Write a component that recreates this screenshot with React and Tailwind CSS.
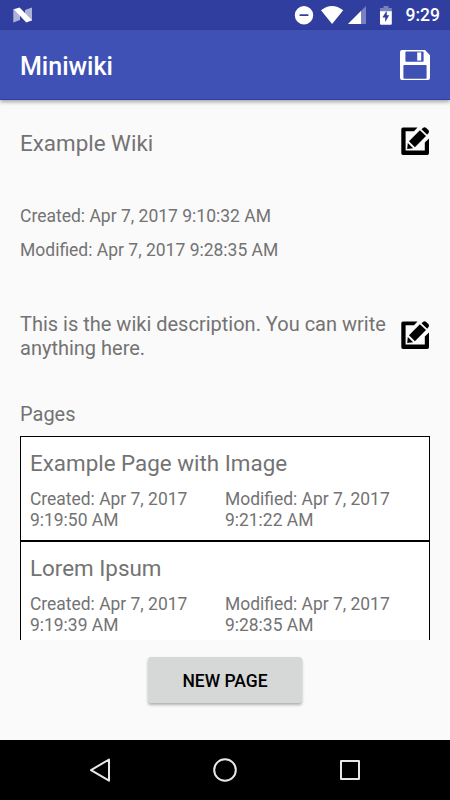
const pages = [
  {
    title: "Example Page with Image",
    created: "Apr 7, 2017 9:19:50 AM",
    modified: "Apr 7, 2017 9:21:22 AM",
  },
  {
    title: "Lorem Ipsum",
    created: "Apr 7, 2017 9:19:39 AM",
    modified: "Apr 7, 2017 9:28:35 AM",
  },
];

const EditIcon = () => (
  <svg className="h-7 w-7" viewBox="0 0 28 28" fill="currentColor">
    <path d="M2 .5H16.5L13 4.2H4.6V23.6H23.8V15.4L28 11.6V26.2A1.8 1.8 0 0 1 26.2 28H2A1.8 1.8 0 0 1 .3 26.2V2.3A1.8 1.8 0 0 1 2 .5Z" />
    <path d="M18.9 3.3L25 9.1L13.9 20.2L8 14.3Z" />
    <path d="M6.8 15.9L12.2 21.3L6.2 22Z" />
    <path d="M20.5 2.2L22.2 .7Q23.6 -.2 25 .7L27.4 3Q28.5 4.6 27.5 6L26.2 7.7Z" />
  </svg>
);

const SaveIcon = () => (
  <svg className="h-[30px] w-[30px]" viewBox="0 0 30 30" fill="white">
    <path
      fillRule="evenodd"
      d="M2 0H25L30 5.2V28A2 2 0 0 1 28 30H2A2 2 0 0 1 0 28V2A2 2 0 0 1 2 0ZM6.2 1.4Q5.4 1.4 5.4 2.2V11Q5.4 11.8 6.2 11.8H22.8Q23.6 11.8 23.6 11V2.2Q23.6 1.4 22.8 1.4ZM4.2 15Q3.4 15 3.4 15.8V28Q3.4 28.8 4.2 28.8H25.8Q26.6 28.8 26.6 28V15.8Q26.6 15 25.8 15Z"
    />
    <path d="M17.2 2.4H21.2V10.6H17.2Z" />
  </svg>
);

const StatusBar = () => (
  <div className="flex h-[30px] items-center bg-[#303f9f] text-white">
    <svg className="ml-3 h-[30px] w-6" viewBox="12 0 24 30" fill="white">
      <path d="M13.3 8.8L20 13V20L13.3 22.5Z" opacity=".6" />
      <path d="M32 7.5V21L25 17V10Z" opacity=".6" />
      <path d="M13.8 9.2L19.6 7.5L32 20.3L26.3 22.5Z" />
    </svg>
    <svg className="ml-auto h-[30px] w-[102px]" viewBox="294 0 102 30" fill="white">
      <path
        fillRule="evenodd"
        d="M305 6A9.2 9.2 0 1 1 305 24.4A9.2 9.2 0 1 1 305 6ZM300.6 14.3V16.1H309.4V14.3Z"
      />
      <path d="M322 10.2Q333 1.6 344.2 10.2L333.1 24Z" />
      <path d="M367 6V24H349Z" opacity=".35" />
      <path d="M362 11V24H349Z" />
      <path d="M384.5 6H389.5V8H392.8V12H381V8H384.5Z" opacity=".35" />
      <path
        fillRule="evenodd"
        d="M381 11.2H392.8V23.7Q392.8 24.7 391.8 24.7H382Q381 24.7 381 23.7ZM387.8 10.5L383.4 17.5H386.2V22L390.2 15.3H387.8Z"
      />
    </svg>
    <span className="mr-2.5 ml-[11px] pt-px text-[17.5px] font-medium">9:29</span>
  </div>
);

const PageCard = ({ page }) => (
  <div className="h-[104.5px] shrink-0 border border-black bg-white px-[9px] pt-[13px]">
    <h3 className="text-[22.4px] leading-[27px]">{page.title}</h3>
    <div className="mt-3 flex text-[17.45px] leading-[21px]">
      <p className="w-[195px] pr-5">{`Created: ${page.created}`}</p>
      <p className="w-[195px] pr-5">{`Modified: ${page.modified}`}</p>
    </div>
  </div>
);

const NavBar = () => (
  <div className="flex h-[60px] items-center justify-center bg-black">
    <svg
      className="h-[60px] w-[310px]"
      viewBox="70 740 310 60"
      fill="none"
      stroke="#e8e8e8"
      strokeWidth="2"
      strokeLinejoin="round"
    >
      <path d="M109 759.5V780.7L91 770.1Z" />
      <circle cx="225" cy="770" r="10.8" />
      <path d="M341 761H359V779H341Z" />
    </svg>
  </div>
);

const App = () => {
  return (
    <div className="flex h-[800px] w-[450px] flex-col overflow-hidden bg-[#fafafa] font-[Roboto,sans-serif] text-[#737373]">
      <StatusBar />
      <header className="flex h-[70px] items-center justify-between border-b border-[#303f9f] bg-[#3f51b5] px-5 text-white shadow-[0_2px_4px_rgba(0,0,0,0.35)]">
        <h1 className="pt-[5px] text-[25px] font-medium">Miniwiki</h1>
        <SaveIcon />
      </header>

      <main className="flex flex-1 flex-col px-5">
        <div className="mt-[26px] flex h-[30px] items-center justify-between">
          <h2 className="pt-[5px] text-[22.4px]">Example Wiki</h2>
          <button className="mr-px text-black">
            <EditIcon />
          </button>
        </div>

        <div className="mt-[50px] text-[17.5px] leading-[21px]">
          <p>Created: Apr 7, 2017 9:10:32 AM</p>
          <p className="mt-[13px]">Modified: Apr 7, 2017 9:28:35 AM</p>
        </div>

        <div className="mt-[51px] flex items-center justify-between">
          <p className="w-[370px] text-[20px] leading-6">
            This is the wiki description. You can write anything here.
          </p>
          <button className="mr-px mb-0.5 text-black">
            <EditIcon />
          </button>
        </div>

        <h2 className="mt-[42px] text-[20px] leading-6">Pages</h2>
        <div className="mt-2.5 flex h-[204px] flex-col overflow-hidden">
          {pages.map((page) => (
            <PageCard key={page.title} page={page} />
          ))}
        </div>

        <button className="mt-[17px] h-[46px] w-[154px] self-center rounded-[3px] bg-[#d6d7d7] pt-0.5 text-[17.5px] font-medium text-black shadow-[0_2px_3px_rgba(0,0,0,0.3)]">
          NEW PAGE
        </button>
      </main>

      <NavBar />
    </div>
  );
};

export default App;
